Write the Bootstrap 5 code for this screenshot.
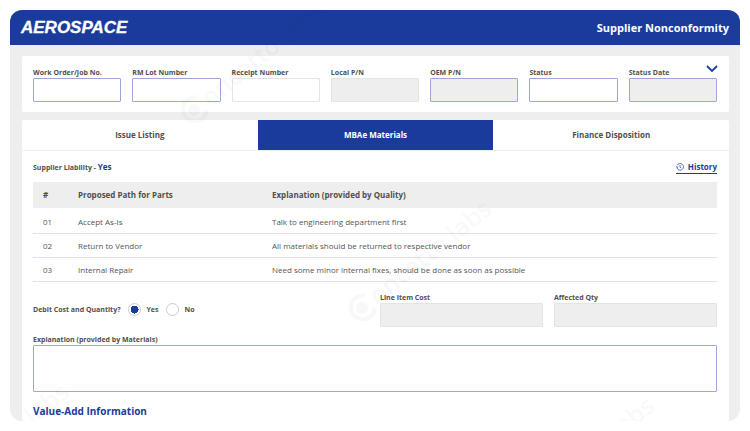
<!DOCTYPE html>
<html lang="en">
<head>
<meta charset="utf-8">
<meta name="viewport" content="width=device-width, initial-scale=1">
<title>Supplier Nonconformity</title>
<link href="https://cdn.jsdelivr.net/npm/bootstrap@5.3.0/dist/css/bootstrap.min.css" rel="stylesheet">
<style>
  :root { --brand: #1b3c9b; --soft: #eeeeee; --line: #e2e2e2; --edge: #9aa9d6; }
  body { font-family: "Open Sans", "Noto Sans", sans-serif; font-size: 7px; line-height: 12px; color: #505050; padding: 10px; }
  .shell { min-height: calc(100vh - 20px); background: var(--soft); border-radius: 12px; }
  .topbar { background: var(--brand); height: 35px; padding: 0 11px; }
  .brand-name { font: italic bold 17px/20px "Liberation Sans", sans-serif; -webkit-text-stroke: 0.3px #fff; }
  .page-title { font-size: 11px; line-height: 16px; }
  .main-area { padding: 11px 11px 0 12px; gap: 8px; }
  .panel { background: #fff; border-radius: 2px; }
  .filters { padding: 11px 12px 10px 11px; gap: 11px; }
  .field { flex: 1 1 0; min-width: 0; }
  .field label, .notes label { display: block; line-height: 11px; }
  .box { border: 1px solid var(--edge); border-radius: 1px; padding: 2px 6px; font-size: 8px; min-height: 0; height: 24px; }
  .box:disabled { background: var(--soft); }
  .box.plain { border-color: #e4e4e4; }
  .expander { top: 5px; right: 10px; line-height: 0; }
  .tabs { border-bottom: 1px solid #f0f0f0; }
  .tabs .nav-link { font-size: 8px; line-height: 14px; padding: 8px; border-radius: 0; color: #505050; }
  .tabs .nav-link.active { background: var(--brand); color: #fff; }
  .content { padding: 9px 12px 0 11px; }
  .answer, .section-title, .history { color: var(--brand); }
  .answer { font-size: 8px; }
  .history { font-size: 8px; line-height: 13px; border-bottom: 1px solid var(--brand); }
  .paths { margin: 8px 0 0; font-size: 8px; line-height: 12px; --bs-table-color: #555; }
  .paths th { font-weight: 700; line-height: 14px; padding: 6px 0; background: var(--soft); color: #505050; border: 0; }
  .paths td { padding: 6px 0 5px; border-color: var(--line); }
  .paths tbody tr:first-child td { padding-top: 8px; }
  .paths th:first-child, .paths td:first-child { width: 45px; padding-left: 10px; }
  .paths th:nth-child(2), .paths td:nth-child(2) { width: 194px; }
  .debit { padding-top: 10px; }
  .choices { gap: 8px; }
  .pick { gap: 5px; }
  .pick .form-check-input { width: 13px; height: 13px; margin: 0; border-color: #ccc; background-image: none; }
  .pick .form-check-input:checked { background: radial-gradient(circle, var(--brand) 0 4px, #fff 4px); }
  .costs { width: 337px; gap: 11px; }
  .notes { padding-top: 7px; }
  .notes .box { height: 47px; resize: none; }
  .section-title { font-size: 10px; line-height: 14px; margin: 12px 0 0; }
  .watermark { inset: 0; pointer-events: none; opacity: .022; font-size: 25px; font-weight: 600; }
</style>
</head>
<body class="bg-white">
<div class="shell overflow-hidden d-flex flex-column position-relative">
  <header class="topbar d-flex align-items-center justify-content-between text-white">
    <span class="brand-name">AEROSPACE</span>
    <h1 class="page-title fw-bold mb-0">Supplier Nonconformity</h1>
  </header>
  <main class="main-area d-flex flex-column flex-grow-1">
    <form class="panel filters d-flex position-relative fw-bold">
      <div class="field"><label for="wo">Work Order/Job No.</label><input id="wo" class="form-control box"></div>
      <div class="field"><label for="lot">RM Lot Number</label><input id="lot" class="form-control box"></div>
      <div class="field"><label for="rec">Receipt Number</label><input id="rec" class="form-control box plain"></div>
      <div class="field"><label for="lpn">Local P/N</label><input id="lpn" class="form-control box plain" disabled></div>
      <div class="field"><label for="opn">OEM P/N</label><input id="opn" class="form-control box" disabled></div>
      <div class="field"><label for="st">Status</label><input id="st" class="form-control box"></div>
      <div class="field"><label for="sd">Status Date</label><input id="sd" class="form-control box" disabled></div>
      <button type="button" class="btn p-0 border-0 position-absolute expander" aria-label="Expand">
        <svg width="14" height="14" viewBox="0 0 14 14" fill="none" stroke="#1b3c9b" stroke-width="1.8"><path d="M2 5l5 5 5-5"/></svg>
      </button>
    </form>
    <section class="panel flex-grow-1">
      <nav class="tabs nav nav-justified fw-bold">
        <a class="nav-link" href="#issues">Issue Listing</a>
        <a class="nav-link active" href="#materials" aria-current="page">MBAe Materials</a>
        <a class="nav-link" href="#finance">Finance Disposition</a>
      </nav>
      <div class="content">
        <div class="d-flex justify-content-between align-items-center">
          <span class="fw-bold">Supplier Liability - <span class="answer">Yes</span></span>
          <a class="history d-flex align-items-center gap-1 fw-bold text-decoration-none" href="#history">
            <svg width="8" height="8" viewBox="0 0 16 16" fill="none" stroke="currentColor" stroke-width="1.4"><path d="M2 10A6.7 6.7 0 1 0 2.2 5M.5 6.500 2 9.500l2.500-2M8 4v4.500l2.500 1.500"/></svg>History</a>
        </div>
        <table class="table paths">
          <thead><tr><th>#</th><th>Proposed Path for Parts</th><th>Explanation (provided by Quality)</th></tr></thead>
          <tbody>
            <tr><td>01</td><td>Accept As-Is</td><td>Talk to engineering department first</td></tr>
            <tr><td>02</td><td>Return to Vendor</td><td>All materials should be returned to respective vendor</td></tr>
            <tr><td>03</td><td>Internal Repair</td><td>Need some minor internal fixes, should be done as soon as possible</td></tr>
          </tbody>
        </table>
        <form class="fw-bold">
          <div class="debit d-flex justify-content-between">
            <div class="choices d-flex align-items-center" role="radiogroup" aria-labelledby="dq">
              <span id="dq">Debit Cost and Quantity?</span>
              <span class="pick d-flex align-items-center"><input class="form-check-input" type="radio" name="debit" id="dy" checked><label for="dy">Yes</label></span>
              <span class="pick d-flex align-items-center"><input class="form-check-input" type="radio" name="debit" id="dn"><label for="dn">No</label></span>
            </div>
            <div class="costs d-flex">
              <div class="field"><label for="lic">Line Item Cost</label><input id="lic" class="form-control box plain" disabled></div>
              <div class="field"><label for="qty">Affected Qty</label><input id="qty" class="form-control box plain" disabled></div>
            </div>
          </div>
          <div class="notes"><label for="ex">Explanation (provided by Materials)</label><textarea id="ex" class="form-control box"></textarea></div>
        </form>
        <h2 class="section-title fw-bold">Value-Add Information</h2>
      </div>
    </section>
  </main>
  <svg class="watermark position-absolute w-100 h-100" aria-hidden="true">
    <defs>
      <g id="stamp" transform="rotate(-39)">
        <path d="M10-8A12 12 0 1 0 10 8" fill="none" stroke="#000" stroke-width="4"/>
        <circle r="6"/>
        <text x="14" y="8">oncetto labs</text>
      </g>
    </defs>
    <use href="#stamp" x="184" y="100"/>
    <use href="#stamp" x="352" y="298"/>
    <use href="#stamp" x="-70" y="481"/>
    <use href="#stamp" x="515" y="495"/>
  </svg>
</div>
</body>
</html>
